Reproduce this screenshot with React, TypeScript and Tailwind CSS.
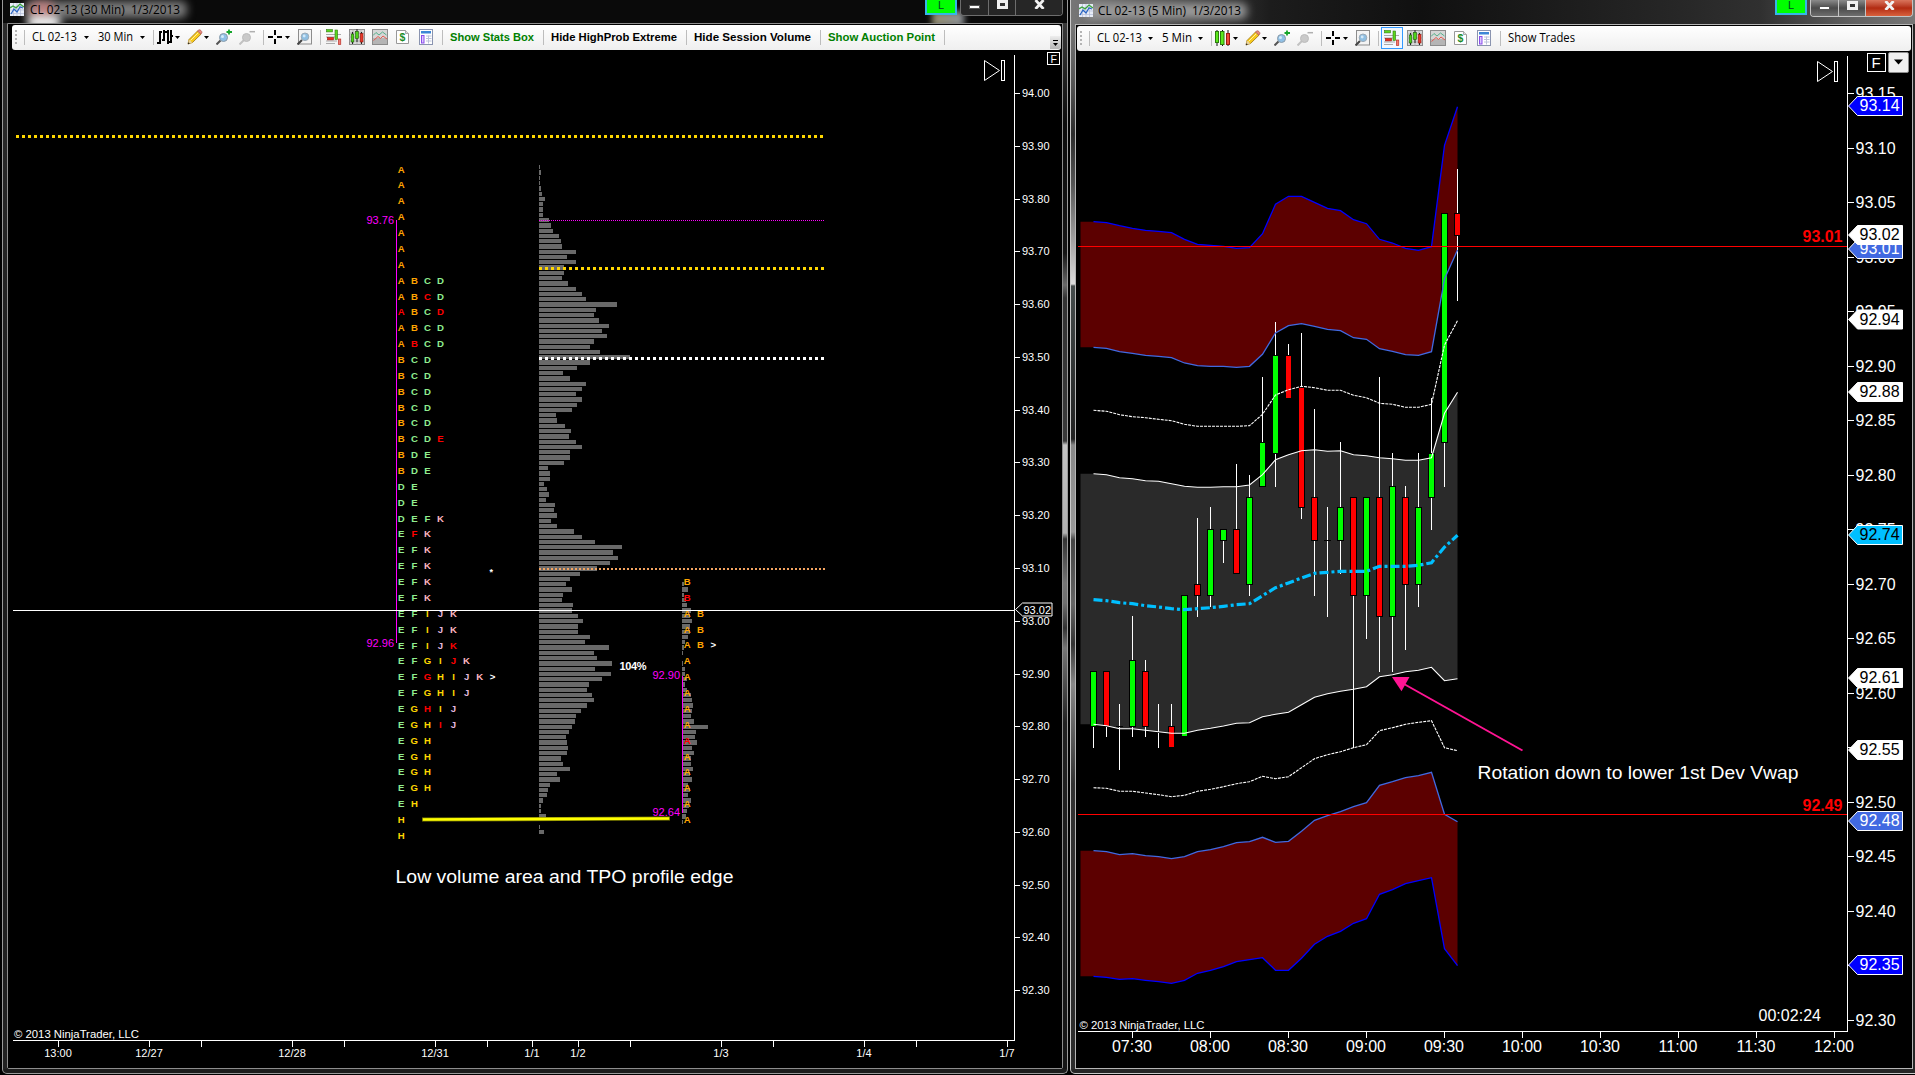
import type { ReactNode } from 'react';
import clsx from 'clsx';

const ARIAL = '"Liberation Sans", Arial, sans-serif';

/* ---------- toolbar icons ---------- */

function Sep({ className }: { className?: string }) {
  return <span className={clsx('h-[15px] w-px shrink-0 bg-[#bdbdbd]', className)} />;
}

function Caret({ className }: { className?: string }) {
  return (
    <svg className={clsx('h-[3px] w-[5px] shrink-0', className)} viewBox="0 0 5 3">
      <path d="M0 0h5L2.5 3z" fill="#000" />
    </svg>
  );
}

function Icon({ className, children }: { className?: string; children: ReactNode }) {
  return (
    <svg className={clsx('h-4 w-4 shrink-0', className)} viewBox="0 0 16 16">
      {children}
    </svg>
  );
}

function Grip() {
  return (
    <svg className="ml-[3px] h-[15px] w-[2px] shrink-0" viewBox="0 0 2 15">
      {[0, 4, 8, 12].map((y) => (
        <rect key={y} y={y} width="2" height="2" fill="#b4b4b4" />
      ))}
    </svg>
  );
}

function BarsIcon() {
  return (
    <Icon className="ml-[3px]">
      <g fill="#000" shapeRendering="crispEdges">
        <rect x="2" y="2" width="2" height="13" />
        <rect x="0" y="13" width="2" height="2" />
        <rect x="4" y="2" width="1" height="2" />
        <rect x="6" y="1" width="2" height="11" />
        <rect x="5" y="10" width="1" height="2" />
        <rect x="8" y="2" width="2" height="2" />
        <rect x="10" y="1" width="2" height="14" />
        <rect x="13" y="1" width="2" height="13" />
        <rect x="12" y="12" width="1" height="2" />
        <rect x="15" y="6" width="1" height="2" />
      </g>
    </Icon>
  );
}

function CandlesIcon() {
  return (
    <Icon className="ml-[3px]">
      <path d="M2 0v16M7.500 0v16M13 0v16" stroke="#111" />
      <rect x="0.5" y="1.5" width="3" height="11" fill="#5be81c" stroke="#2c7d0c" />
      <rect x="5.500" y="1.5" width="3.5" height="13" fill="#5be81c" stroke="#2c7d0c" />
      <rect x="11.5" y="3.5" width="3" height="11" fill="#f04a3a" stroke="#9d1b10" />
    </Icon>
  );
}

function PencilIcon() {
  return (
    <Icon className="ml-[7px]">
      <path d="M1 15l1-4.5L10.5 2l3.5 3.2L5.5 13.5z" fill="#f7c91c" stroke="#9c7410" strokeWidth="0.8" />
      <path d="M3.5 11.5l8-8" stroke="#fff0a0" strokeWidth="1" />
      <path d="M10.5 2L12 .8c1-.5 3.2 1.5 2.9 2.7L14 5.2z" fill="#e88a7a" stroke="#a55" strokeWidth="0.7" />
      <path d="M1 15l1-4.2 3.4 2.7z" fill="#e9d2a0" />
      <path d="M.8 15.3l.5-2 1.6 1.3z" fill="#222" />
    </Icon>
  );
}

function ZoomIcon({ out }: { out?: boolean }) {
  return (
    <Icon className="ml-[7px]">
      <path d="M.5 15.5L5 11" stroke={out ? '#c2c2c2' : '#555'} strokeWidth="2" />
      <circle cx="7.5" cy="8.5" r="4" fill={out ? '#c9c9c9' : '#8fc0e6'} stroke={out ? '#bcbcbc' : '#8a9aa8'} />
      {!out && <circle cx="6.5" cy="7.5" r="1.5" fill="#d5ecfa" />}
      {out ? (
        <path d="M10.5 2.7H16" stroke="#b0b0b0" strokeWidth="1.5" />
      ) : (
        <path d="M13 .5v5M10.5 3H16" stroke="#16a52c" strokeWidth="1.8" />
      )}
    </Icon>
  );
}

function CrossIcon() {
  return (
    <svg className="ml-1 h-4 w-[15px] shrink-0" viewBox="0 0 15 16">
      <path d="M7 1v5M7 10v5M0 8h5M9 8h5" stroke="#000" strokeWidth="2" shapeRendering="crispEdges" />
    </svg>
  );
}

function PageZoomIcon() {
  return (
    <Icon className="ml-[7px]">
      <rect x="1.5" y="0.5" width="13" height="14.5" fill="#f4f4f4" stroke="#8d8d8d" />
      <path d="M.5 15.5L5 11" stroke="#444" strokeWidth="2" />
      <circle cx="8" cy="7.8" r="3.8" fill="#8fbfe2" stroke="#9aa9b6" />
      <circle cx="7.2" cy="7" r="1.4" fill="#d2e8f7" />
    </Icon>
  );
}

function DepthIcon() {
  return (
    <Icon>
      <path d="M0 5.5h15M0 8h10M0 12h11M0 14.5h9" stroke="#aaa" />
      <rect x="0.5" y="0.5" width="6" height="2.4" fill="#59d81d" stroke="#347a15" strokeWidth="0.6" />
      <rect x="1.5" y="8.5" width="6" height="2.4" fill="#ee2a1c" stroke="#8f1a12" strokeWidth="0.6" />
      <rect x="9" y="1" width="2.6" height="9.5" fill="#59d81d" stroke="#347a15" strokeWidth="0.6" />
      <rect x="12.4" y="10" width="2.4" height="5.5" fill="#f27a70" stroke="#b02018" strokeWidth="0.6" />
    </Icon>
  );
}

function ChartTraderIcon() {
  return (
    <Icon>
      <rect x="0.5" y="0.5" width="15" height="15" fill="#d9d9d9" stroke="#8c8c8c" />
      <path d="M0 4h16M0 8h16M0 12h16M4 0v16M8 0v16M12 0v16" stroke="#a4a4a4" strokeWidth="0.7" />
      <path d="M3.5 3v12M8 0v13M12.5 3v12" stroke="#222" />
      <rect x="2.2" y="5" width="2.6" height="8" fill="#4fd319" stroke="#1f5d0a" strokeWidth="0.6" />
      <rect x="6.5" y="2.5" width="3" height="7" fill="#4fd319" stroke="#1f5d0a" strokeWidth="0.6" />
      <rect x="11.2" y="4.5" width="2.8" height="8.5" fill="#e8382a" stroke="#8d1810" strokeWidth="0.6" />
    </Icon>
  );
}

function IndicatorIcon() {
  return (
    <Icon>
      <rect x="0.5" y="0.5" width="15" height="15" fill="#d6d6d6" stroke="#8c8c8c" />
      <rect x="1" y="9" width="14" height="6" fill="#b5b5b5" />
      <path d="M1 6.5l3-3 3 2.5 3.5-3 4 3" stroke="#56b08a" fill="none" />
      <path d="M1.5 11.5L6 7.5l2.5 2 2.5-2.5 4 3" stroke="#e45b50" fill="none" />
    </Icon>
  );
}

function StrategyIcon() {
  return (
    <svg className="ml-2 h-4 w-[13px] shrink-0" viewBox="0 0 13 16">
      <path d="M.5 1.5h9l3 3v10H.5z" fill="#fff" stroke="#999" />
      <path d="M9.5 1.5v3h3" fill="#ddd" stroke="#999" strokeWidth="0.8" />
      <text x="6.5" y="12.2" fontSize="10.5" fontWeight="700" textAnchor="middle" fill="#1c8c28" fontFamily={ARIAL}>
        $
      </text>
    </svg>
  );
}

function PropertiesIcon() {
  return (
    <svg className="ml-[10px] h-4 w-[14px] shrink-0" viewBox="0 0 14 16">
      <rect x="0.5" y="0.5" width="13" height="15" fill="#fff" stroke="#8a94b0" />
      <rect x="2" y="2" width="10" height="2.5" fill="#3d87d6" />
      <rect x="2.5" y="6.5" width="2.5" height="7.5" fill="#dcc7ff" stroke="#8a4dea" />
      <path d="M7 7h5.5M7 9.5h5.5M7 12h5.5M9.5 6.5v8" stroke="#bcc2da" />
    </svg>
  );
}

function ToolGroup({ candles, active }: { candles?: boolean; active?: boolean }) {
  return (
    <>
      {candles ? <CandlesIcon /> : <BarsIcon />}
      <Caret className="ml-[2px]" />
      <PencilIcon />
      <Caret className="ml-px" />
      <ZoomIcon />
      <ZoomIcon out />
      <Sep className="ml-[8px]" />
      <CrossIcon />
      <Caret className="ml-[2px]" />
      <PageZoomIcon />
      <Sep className="ml-[7px]" />
      <span
        className={clsx(
          'ml-[2px] flex h-[22px] w-[22px] shrink-0 items-center justify-center border',
          active ? 'border-[#3399ff] bg-[#f3f8ff]' : 'border-transparent',
        )}
      >
        <DepthIcon />
      </span>
      <span className="ml-[4px] flex gap-[7px]">
        <ChartTraderIcon />
        <IndicatorIcon />
      </span>
      <StrategyIcon />
      <PropertiesIcon />
      <Sep className="ml-[9px]" />
    </>
  );
}

/* Segoe-like label drawn at a fixed width */
function Label({ w, children, bold, color = '#000' }: { w: number; children: string; bold?: boolean; color?: string }) {
  return (
    <svg className="h-[20px] shrink-0 overflow-visible" style={{ width: w }}>
      <text
        x="0"
        y={bold ? 14 : 13.5}
        textLength={w}
        lengthAdjust="spacingAndGlyphs"
        fontSize={bold ? 11.5 : 12}
        fontWeight={bold ? 700 : 400}
        fontFamily={bold ? ARIAL : '"Open Sans", "Noto Sans", sans-serif'}
        fill={color}
        xmlSpace="preserve"
      >
        {children}
      </text>
    </svg>
  );
}

/* ---------- window chrome ---------- */

function AppIcon() {
  return (
    <svg className="h-[13px] w-[14px] shrink-0" viewBox="0 0 14 13">
      <rect width="14" height="13" fill="#e8edf7" />
      <path d="M0 3.5h14M0 7h14M0 10.5h14M3.5 0v13M7 0v13M10.5 0v13" stroke="#b3bcd8" strokeWidth="0.7" />
      <path d="M0 5l3-2 3 2 4-4 4 3" stroke="#3aa53a" strokeWidth="1.3" fill="none" />
      <path d="M1 11l3-5 3 3 3-5 3 1" stroke="#2a66c4" strokeWidth="1.3" fill="none" />
    </svg>
  );
}

function CaptionButtons({ active }: { active?: boolean }) {
  return (
    <div
      className={clsx(
        'flex overflow-hidden rounded-b-[4px] border border-t-0',
        active ? 'h-[17px] w-[103px] border-[#c4c4c4]' : 'h-4 w-[103px] border-[#6d6d6d]',
      )}
    >
      <div
        className={clsx(
          'flex w-[28px] items-end justify-center border-r pb-[6px]',
          active
            ? 'border-[#c4c4c4] bg-linear-to-b from-[#8a8a8a] via-[#4a4a4a] to-[#6e6e6e]'
            : 'border-[#6d6d6d] bg-[#262626]',
        )}
      >
        <span className="h-[4px] w-[11px] border border-[#555] bg-white" />
      </div>
      <div
        className={clsx(
          'flex w-[27px] items-end justify-center border-r pb-[6px]',
          active
            ? 'border-[#c4c4c4] bg-linear-to-b from-[#8a8a8a] via-[#4a4a4a] to-[#6e6e6e]'
            : 'border-[#6d6d6d] bg-[#262626]',
        )}
      >
        <span className="h-[9px] w-[11px] border-[3px] border-[#f0f0f0] bg-[#333]" />
      </div>
      <div
        className={clsx(
          'flex flex-1 items-end justify-center pb-[6px]',
          active ? 'bg-linear-to-b from-[#d9745c] via-[#b22a10] to-[#d8603c]' : 'bg-[#262626]',
        )}
      >
        <svg className="h-[9px] w-[11px]" viewBox="0 0 11 9">
          <path d="M1.5 0l8 9M9.5 0l-8 9" stroke="#f2f2f2" strokeWidth="2.8" />
        </svg>
      </div>
    </div>
  );
}

function BadgeL() {
  return (
    <div className="flex h-[15px] w-[32px] items-end justify-center border-2 border-t-0 border-[#35b6e8] bg-[#00ff00]">
      <span className="text-[11px] leading-[15px] text-[#042]" style={{ fontFamily: ARIAL }}>
        L
      </span>
    </div>
  );
}

/* ---------- left chart: TPO profile ---------- */

const tpoColors: Record<string, string> = {
  A: '#ffa500',
  B: '#ffa500',
  C: '#90ee90',
  D: '#90ee90',
  E: '#90ee90',
  F: '#90ee90',
  G: '#ffd700',
  H: '#ffd700',
  I: '#ffd700',
  J: '#e3b8dc',
  K: '#ffb6c1',
  '>': '#ffffff',
};

// lower case marks a single red print
const tpoRows = [
  'A', 'A', 'A', 'A', 'A', 'A', 'A',
  'ABCD', 'ABcD', 'aBCd', 'ABCD', 'AbCD',
  'BCD', 'BCD', 'BCD', 'BCD', 'BCD', 'BCDe',
  'BDE', 'BDE', 'DE', 'DE', 'DEFK',
  'EfK', 'EFK', 'EFK', 'EFK', 'EFK',
  'EFIJK', 'EFIJK', 'EFIJk', 'EFGIjK', 'EFgHIJK>', 'EFGHIJ',
  'EGhIJ', 'EGHiJ', 'EGH', 'EGH', 'EGH', 'EGH', 'EH', 'H', 'H',
];

const tpoRows2 = ['B', 'b', 'AB', 'AB', 'AB>', 'A', 'A', 'A', 'A', 'A', 'a', 'A', 'A', 'A', 'A', 'A'];

const volume1 = [
  1, 2, 1, 1, 2, 3, 6, 4, 4, 4, 10, 12, 14, 20, 22, 23, 37, 28, 37, 25, 25, 23, 29, 37, 43, 47, 78, 57, 55, 60,
  70, 63, 68, 55, 51, 61, 91, 51, 38, 24, 31, 47, 43, 37, 43, 38, 33, 17, 18, 26, 32, 30, 37, 43, 31, 31, 25, 9,
  11, 11, 5, 8, 10, 7, 16, 15, 18, 12, 18, 35, 43, 56, 83, 74, 79, 71, 58, 41, 31, 27, 33, 24, 23, 34, 33, 39, 44,
  39, 39, 51, 46, 70, 55, 58, 73, 56, 72, 63, 50, 48, 53, 55, 48, 42, 37, 36, 33, 30, 27, 28, 29, 28, 22, 24, 31,
  18, 21, 11, 9, 8, 4, 2, 2, 7, 0, 1, 5,
];

const volume2 = [
  2, 6, 2, 4, 5, 9, 8, 10, 8, 8, 6, 3, 2, 1, 0, 1, 3, 3, 5, 3, 5, 9, 10, 11, 10, 9, 12, 26, 14, 13, 15, 10, 12, 9,
  9, 11, 8, 10, 6, 8, 6, 9, 7, 5, 4, 1,
];

const leftTimes: [number, string][] = [
  [58, '13:00'], [149, '12/27'], [201, ''], [292, '12/28'], [344, ''], [435, '12/31'], [487, ''], [532, '1/1'],
  [578, '1/2'], [630, ''], [721, '1/3'], [773, ''], [864, '1/4'], [916, ''], [1007, '1/7'],
];

function Volume({ x, y, bars }: { x: number; y: number; bars: number[] }) {
  const top = (i: number) => Math.round(y + i * 5.277 - 2);
  return (
    <g fill="#696969" shapeRendering="crispEdges">
      {bars.map((w, i) => (
        <rect key={i} x={x} y={top(i)} width={w} height={top(i + 1) - top(i) - 1} />
      ))}
    </g>
  );
}

function Tpo({ x, y, rows }: { x: number; y: number; rows: string[] }) {
  return (
    <g fontSize="9.6" fontWeight="700" textAnchor="middle">
      {rows.map((row, r) =>
        row.split('').map((c, i) => (
          <text
            key={`${r}-${i}`}
            x={x + i * 13.05}
            y={Math.round(y + r * 15.865)}
            fill={c >= 'a' ? '#ff0000' : tpoColors[c]}
          >
            {c.toUpperCase()}
          </text>
        )),
      )}
    </g>
  );
}

function SkipGlyph({ x, y }: { x: number; y: number }) {
  return (
    <g stroke="#fff" fill="none">
      <path d={`M${x} ${y}v20l15-10z`} />
      <rect x={x + 17} y={y} width="3" height="20" />
    </g>
  );
}

function LeftChart() {
  return (
    <svg className="block h-[1018px] w-[1054px]" viewBox="8 50 1054 1018" fontFamily={ARIAL}>
      <rect x="8" y="50" width="1054" height="1018" fill="#000" />
      <Volume x={539} y={167.2} bars={volume1} />
      <Volume x={682} y={584.1} bars={volume2} />

      <g shapeRendering="crispEdges" fill="none">
        <path d="M16 136.500H824" stroke="#ffd700" strokeWidth="3" strokeDasharray="3 3" />
        <path d="M539 220.5H825" stroke="#ff00ff" strokeDasharray="1 1" />
        <path d="M539 268.5H825" stroke="#ffd700" strokeWidth="3" strokeDasharray="3 3" />
        <path d="M539 358.5H825" stroke="#fff" strokeWidth="3" strokeDasharray="3 3" />
        <path d="M539 569H825" stroke="#f4a460" strokeWidth="2" strokeDasharray="2 2" />
        <path d="M396.5 220V643" stroke="#ff00ff" />
        <path d="M682.5 676V813" stroke="#ff00ff" />
      </g>

      <Tpo x={401.3} y={172.6} rows={tpoRows} />
      <Tpo x={687.3} y={585} rows={tpoRows2} />

      <path d="M13 610.5H1014" stroke="#fff" shapeRendering="crispEdges" />
      <path d="M422 819.5L670 818.5" stroke="#7f7f00" strokeWidth="4" />
      <path d="M423 819.5L669 818.5" stroke="#ffff00" strokeWidth="2.6" />

      <g fontSize="11" fill="#ff00ff" textAnchor="end">
        <text x="394" y="224">93.76</text>
        <text x="394" y="647">92.96</text>
        <text x="680" y="679">92.90</text>
        <text x="680" y="816">92.64</text>
      </g>
      <text x="619.5" y="670" fontSize="11" fontWeight="700" fill="#fff" textLength="27">104%</text>
      <text x="489.5" y="574.5" fontSize="9" fontWeight="700" fill="#fff">*</text>
      <text x="395.5" y="883" fontSize="18.7" fill="#fff" textLength="338" lengthAdjust="spacingAndGlyphs">
        Low volume area and TPO profile edge
      </text>

      <path d="M1014.5 55V1041M13 1040.5H1014" stroke="#fff" shapeRendering="crispEdges" />
      <g fontSize="11" fill="#fff">
        {Array.from({ length: 18 }, (_, i) => {
          const y = Math.round(93.1 + i * 52.765);
          return (
            <g key={i}>
              <rect x="1015" y={y} width="5" height="1" />
              <text x="1022" y={y + 4}>{(94 - i * 0.1).toFixed(2)}</text>
            </g>
          );
        })}
        {leftTimes.map(([x, label]) => (
          <g key={x}>
            <rect x={x} y="1041" width="1" height="6" />
            <text x={x} y="1057" textAnchor="middle">{label}</text>
          </g>
        ))}
        <text x="14" y="1038" textLength="125" lengthAdjust="spacingAndGlyphs">© 2013 NinjaTrader, LLC</text>
        <path d="M1015.5 609.500l7-6.500h29.500v13h-29.500z" fill="#000" stroke="#fff" />
        <text x="1023.500" y="613.5">93.02</text>
      </g>

      <SkipGlyph x={984.5} y={60.5} />
      <rect x="1047.5" y="52.5" width="12" height="12" fill="#000" stroke="#fff" />
      <text x="1050.5" y="62.5" fontSize="10.5" fill="#fff">F</text>
    </svg>
  );
}

/* ---------- right chart: 5 min candles with VWAP bands ---------- */

// values are thirds of a pixel below y = 400, first value is bar 0
const bands = {
  up3: [-535, -532, -523, -515, -509, -506, -502, -482, -467, -464, -461, -455, -457, -499, -587, -611, -611, -593, -575, -568, -541, -529, -482, -471, -455, -449, -460, -764, -880],
  up2: [-158, -155, -145, -140, -134, -131, -127, -111, -103, -101, -101, -98, -101, -137, -201, -223, -229, -221, -212, -208, -187, -182, -154, -146, -136, -134, -145, -363, -450],
  upDash: [31, 34, 44, 50, 53, 58, 62, 73, 79, 79, 79, 79, 77, 43, -15, -31, -41, -37, -29, -29, -14, -7, 10, 13, 22, 22, 13, -165, -238],
  up1: [221, 224, 233, 236, 242, 244, 251, 259, 262, 262, 260, 260, 255, 224, 179, 164, 152, 149, 154, 152, 164, 167, 173, 176, 181, 181, 173, 40, -23],
  vwap: [599, 602, 608, 611, 617, 621, 626, 629, 626, 623, 619, 614, 611, 587, 563, 549, 534, 520, 517, 514, 514, 514, 499, 499, 499, 496, 488, 441, 406],
  lo1: [973, 977, 986, 986, 991, 995, 1000, 1000, 991, 985, 978, 970, 968, 950, 943, 937, 914, 892, 881, 874, 868, 860, 830, 824, 815, 811, 802, 842, 836],
  loDash: [1163, 1165, 1174, 1174, 1179, 1184, 1190, 1186, 1174, 1168, 1160, 1151, 1145, 1129, 1136, 1130, 1103, 1076, 1064, 1055, 1043, 1034, 992, 983, 973, 967, 962, 1043, 1052],
  lo2: [1352, 1355, 1364, 1361, 1367, 1370, 1376, 1370, 1355, 1349, 1340, 1328, 1325, 1312, 1327, 1324, 1294, 1261, 1247, 1235, 1220, 1208, 1156, 1145, 1133, 1127, 1117, 1243, 1265],
  lo3: [1729, 1732, 1738, 1736, 1741, 1745, 1750, 1741, 1720, 1711, 1700, 1685, 1679, 1673, 1711, 1711, 1675, 1633, 1609, 1594, 1570, 1556, 1483, 1469, 1451, 1442, 1433, 1646, 1697],
};

// high, body top, body bottom, low, up
const candles: [number, number, number, number, boolean][] = [
  [815, 815, 977, 1043, true],
  [815, 815, 977, 1010, false],
  [912, 979, 979, 1109, true],
  [648, 782, 977, 1010, true],
  [780, 815, 977, 1010, false],
  [912, 995, 995, 1043, true],
  [912, 980, 1041, 1041, false],
  [587, 587, 1007, 1007, true],
  [354, 554, 585, 651, false],
  [321, 389, 585, 620, true],
  [389, 389, 420, 489, true],
  [192, 389, 520, 520, false],
  [225, 293, 552, 587, true],
  [-70, 128, 258, 258, true],
  [-234, -132, 159, 261, true],
  [-168, -132, -7, -7, false],
  [-201, -37, 322, 357, false],
  [27, 293, 420, 587, false],
  [321, 421, 421, 651, true],
  [126, 323, 420, 521, true],
  [293, 293, 585, 1043, false],
  [293, 293, 585, 717, true],
  [-70, 293, 648, 816, false],
  [159, 261, 648, 816, true],
  [258, 293, 552, 750, false],
  [159, 323, 552, 620, true],
  [-6, 162, 291, 390, true],
  [-558, -558, 126, 261, true],
  [-693, -558, -496, -298, false],
];

const tags: [number, string, string, string][] = [
  [106, '93.14', '#0000ff', '#fff'],
  [249, '93.01', '#4169e1', '#fff'],
  [235, '93.02', '#ffffff', '#000'],
  [319.5, '92.94', '#ffffff', '#000'],
  [392, '92.88', '#ffffff', '#000'],
  [535, '92.74', '#00bfff', '#000'],
  [678, '92.61', '#ffffff', '#000'],
  [750, '92.55', '#ffffff', '#000'],
  [821, '92.48', '#4169e1', '#fff'],
  [965, '92.35', '#0000ff', '#fff'],
];

const rightTimes = ['07:30', '08:00', '08:30', '09:00', '09:30', '10:00', '10:30', '11:00', '11:30', '12:00'];

const barX = (i: number) => 1093.5 + i * 13;
const toY = (v: number) => 400 + v / 3;
const line = (vals: number[]) => vals.map((v, i) => `${barX(i)},${toY(v).toFixed(1)}`).join(' ');

function area(top: number[], bottom: number[]) {
  const back = bottom.map((v, i) => `${barX(i)},${toY(v).toFixed(1)}`).reverse().join(' ');
  return `1080.5,${toY(top[0])} ${line(top)} ${back} 1080.5,${toY(bottom[0])}`;
}

function RightChart() {
  return (
    <svg className="block h-[1017px] w-[836px]" viewBox="1076 51 836 1017" fontFamily={ARIAL}>
      <rect x="1076" y="51" width="836" height="1017" fill="#000" />
      <polygon points={area(bands.up3, bands.up2)} fill="#5c0000" />
      <polygon points={area(bands.up1, bands.lo1)} fill="#2a2a2a" />
      <polygon points={area(bands.lo2, bands.lo3)} fill="#5c0000" />

      <g shapeRendering="crispEdges">
        {candles.map(([high, top, bottom, low, up], i) => {
          const x = 1093 + i * 13;
          const yt = Math.round(toY(top));
          const yb = Math.round(toY(bottom));
          const yh = Math.round(toY(high));
          return (
            <g key={i}>
              <rect x={x} y={yh} width="1" height={Math.round(toY(low)) - yh} fill="#fff" />
              {yb > yt ? (
                <>
                  <rect x={x - 3} y={yt - 1} width="7" height={yb - yt + 2} fill="#000" />
                  <rect x={x - 2} y={yt} width="5" height={yb - yt} fill={up ? '#00ff00' : '#ff0000'} />
                </>
              ) : (
                <rect x={x - 3} y={yt} width="7" height="1" fill="#000" />
              )}
            </g>
          );
        })}
      </g>

      <g fill="none" strokeWidth="1.1">
        <polyline points={line(bands.up3)} stroke="#0000ff" strokeWidth="1.3" />
        <polyline points={line(bands.up2)} stroke="#4169e1" strokeWidth="1.3" />
        <polyline points={line(bands.upDash)} stroke="#fff" strokeDasharray="3 1" />
        <polyline points={line(bands.up1)} stroke="#fff" />
        <polyline points={line(bands.vwap)} stroke="#00bfff" strokeWidth="3.2" strokeDasharray="9 3 3 3" />
        <polyline points={line(bands.lo1)} stroke="#fff" />
        <polyline points={line(bands.loDash)} stroke="#fff" strokeDasharray="3 1" />
        <polyline points={line(bands.lo2)} stroke="#4169e1" strokeWidth="1.3" />
        <polyline points={line(bands.lo3)} stroke="#0000ff" strokeWidth="1.3" />
      </g>

      <path d="M1078 246.5H1847M1078 814.5H1847" stroke="#ff0000" shapeRendering="crispEdges" />
      <g fontSize="16" fontWeight="700" fill="#ff0000">
        <text x="1802.5" y="241.5" textLength="40">93.01</text>
        <text x="1802.5" y="810.5" textLength="40">92.49</text>
      </g>

      <path d="M1404 684L1522.5 750.5" stroke="#ff1493" strokeWidth="2" />
      <path d="M1392 677h17.5l-8 14.3z" fill="#ff1493" />
      <text x="1477.5" y="778.5" fontSize="18.7" fill="#fff" textLength="321" lengthAdjust="spacingAndGlyphs">
        Rotation down to lower 1st Dev Vwap
      </text>

      <path d="M1847.5 56V1032M1078 1031.5H1847" stroke="#fff" shapeRendering="crispEdges" />
      <g fontSize="16" fill="#fff">
        {Array.from({ length: 18 }, (_, i) => {
          const y = Math.round(93 + i * 54.53);
          return (
            <g key={i}>
              <rect x="1848" y={y} width="6" height="1" />
              <text x="1855.5" y={y + 5.5}>{(93.15 - i * 0.05).toFixed(2)}</text>
            </g>
          );
        })}
        {rightTimes.map((t, i) => (
          <g key={t}>
            <rect x={1132 + i * 78} y="1032" width="1" height="6" />
            <text x={1132 + i * 78} y="1052" textAnchor="middle">{t}</text>
          </g>
        ))}
        {tags.map(([y, label, fill, color]) => (
          <g key={label}>
            <path d={`M1848.5 ${y}l9-9.5h45v19h-45z`} fill={fill} stroke="#fff" />
            <text x="1859.5" y={y + 5} fill={color}>{label}</text>
          </g>
        ))}
        <text x="1758.5" y="1021" textLength="62.5">00:02:24</text>
        <text x="1079.5" y="1029" fontSize="11" textLength="125" lengthAdjust="spacingAndGlyphs">
          © 2013 NinjaTrader, LLC
        </text>
      </g>

      <SkipGlyph x={1817.5} y={61.5} />
      <rect x="1867.5" y="53.5" width="18" height="18" fill="#000" stroke="#fff" />
      <text x="1871.5" y="68" fontSize="15" fill="#fff">F</text>
      <rect x="1888.5" y="52.5" width="20" height="20" rx="1.5" fill="#f0f0f0" stroke="#8e8e8e" />
      <path d="M1894 59.500h9l-4.500 5z" fill="#000" />
    </svg>
  );
}

/* ---------- page ---------- */

export default function App() {
  return (
    <div className="flex h-[1075px] w-[1915px] overflow-hidden bg-black">
      <section className="ml-[2px] flex h-[1074px] w-[1066px] shrink-0 flex-col rounded-b-[5px] border border-t-0 border-[#9a9a9a] bg-[#1c1c1c]">
        <header className="relative flex h-[23px] shrink-0 items-start overflow-hidden bg-[#0a0a0a] pl-[7px]">
          <div className="absolute top-px left-[22px] h-[17px] w-[162px] rounded-[6px] bg-[#7c7c7c] blur-[4px]" />
          <div className="absolute top-px left-[26px] h-[18px] w-[26px] rounded-full bg-[#c98080]/80 blur-[4px]" />
          <div className="absolute top-[16px] left-[24px] h-[12px] w-[34px] rounded-full bg-white blur-[4px]" />
          <div className="absolute top-[11px] left-[929px] h-[16px] w-[32px] bg-linear-to-r from-[#cfc69a] to-[#c5ccd6] opacity-70 blur-[3px]" />
          <div className="relative mt-[3px]">
            <AppIcon />
          </div>
          <div className="relative ml-[6px]">
            <Label w={150}>{'CL 02-13 (30 Min)  1/3/2013'}</Label>
          </div>
          <div className="relative mr-[4px] ml-auto flex gap-[3px]">
            <BadgeL />
            <CaptionButtons />
          </div>
        </header>
        <div className="flex min-h-0 flex-1">
          <div className="w-1 shrink-0 bg-linear-to-b from-[#2c2c2c] via-[#1b1b1b] to-[#222]" />
          <div className="flex flex-1 flex-col rounded-b-[2px] border border-[#8d8d8d] bg-black">
            <div
              className="mt-px ml-1 flex h-[25px] w-[1049px] shrink-0 items-center rounded-l-[3px] rounded-r-[3px] bg-linear-to-b from-white to-[#efefef] pb-px"
            >
              <Grip />
              <Sep className="ml-[7px]" />
              <div className="ml-[7px] flex items-center">
                <Label w={45}>CL 02-13</Label>
                <Caret className="ml-[7px]" />
                <div className="ml-[9px] flex items-center">
                  <Label w={35}>30 Min</Label>
                  <Caret className="ml-[7px]" />
                </div>
              </div>
              <Sep className="ml-[8px]" />
              <ToolGroup />
              <div className="ml-[7px] flex items-center">
                <Label w={84} bold color="#008000">Show Stats Box</Label>
                <Sep className="ml-[9px]" />
                <div className="w-[7px]" />
                <Label w={126} bold>Hide HighProb Extreme</Label>
                <Sep className="ml-[9px]" />
                <div className="w-[7px]" />
                <Label w={117} bold>Hide Session Volume</Label>
                <Sep className="ml-[9px]" />
                <div className="w-[7px]" />
                <Label w={107} bold color="#008000">Show Auction Point</Label>
                <Sep className="ml-[9px]" />
              </div>
              <div className="ml-auto flex h-[13px] w-[11px] flex-col items-center justify-center gap-[2px] self-end rounded-br-[3px] bg-linear-to-b from-[#eee] to-[#b5b5b5]">
                <span className="h-px w-[5px] bg-black" />
                <Caret />
              </div>
            </div>
            <LeftChart />
          </div>
          <div className="w-1 shrink-0 bg-[linear-gradient(to_bottom,#3a3a3a_0,#0c0c0c_100px,#151515_230px,#6a6a6a_262px,#333_275px,#3a3a3a_418px,#c4c4c4_422px,#b0b0b0_510px,#333_516px,#777_560px,#707070_580px,#333_605px,#777_625px,#222_700px,#151515_100%)]" />
        </div>
        <div className="h-1 shrink-0" />
      </section>

      <section className="ml-[2px] flex h-[1074px] w-[848px] shrink-0 flex-col rounded-bl-[5px] border border-t-0 border-[#c9c9c9] bg-[#262626]">
        <header className="relative flex h-[24px] shrink-0 items-start overflow-hidden bg-[linear-gradient(to_right,#777_0,#1c1c1c_200px,#101010_350px,#262626_600px,#303030_690px,#606060_780px,#787878_100%)] pl-[8px]">
          <div className="absolute top-[3px] left-[14px] h-[16px] w-[162px] rounded-[6px] bg-[#999] blur-[4px]" />
          <div className="relative mt-[4px]">
            <AppIcon />
          </div>
          <div className="relative mt-px ml-[5px]">
            <Label w={143}>{'CL 02-13 (5 Min)  1/3/2013'}</Label>
          </div>
          <div className="relative mr-[4px] ml-auto flex gap-[3px]">
            <BadgeL />
            <CaptionButtons active />
          </div>
        </header>
        <div className="flex min-h-0 flex-1">
          <div className="w-1 shrink-0 bg-[linear-gradient(to_bottom,#777_0,#555_60px,#2c2c2c_110px,#555_160px,#ddd_260px,#454c4c_262px,#222_415px,#888_421px,#999_508px,#444_516px,#666_580px,#333_620px,#888_660px,#333_760px,#2c2c2c_100%)]" />
          <div className="flex w-[838px] shrink-0 flex-col border border-[#b5b5b5] bg-black">
            <div className="mt-px ml-px flex h-[25px] w-[834px] shrink-0 items-center rounded-[3px] bg-linear-to-b from-white to-[#efefef] pb-px">
              <Grip />
              <Sep className="ml-[7px]" />
              <div className="ml-[7px] flex items-center">
                <Label w={45}>CL 02-13</Label>
                <Caret className="ml-[6px]" />
                <div className="ml-[9px] flex items-center">
                  <Label w={30}>5 Min</Label>
                  <Caret className="ml-[6px]" />
                </div>
              </div>
              <Sep className="ml-[8px]" />
              <ToolGroup candles active />
              <div className="ml-[7px]">
                <Label w={67}>Show Trades</Label>
              </div>
            </div>
            <RightChart />
          </div>
          <div className="w-1 shrink-0" />
        </div>
        <div className="h-1 shrink-0" />
      </section>
    </div>
  );
}
